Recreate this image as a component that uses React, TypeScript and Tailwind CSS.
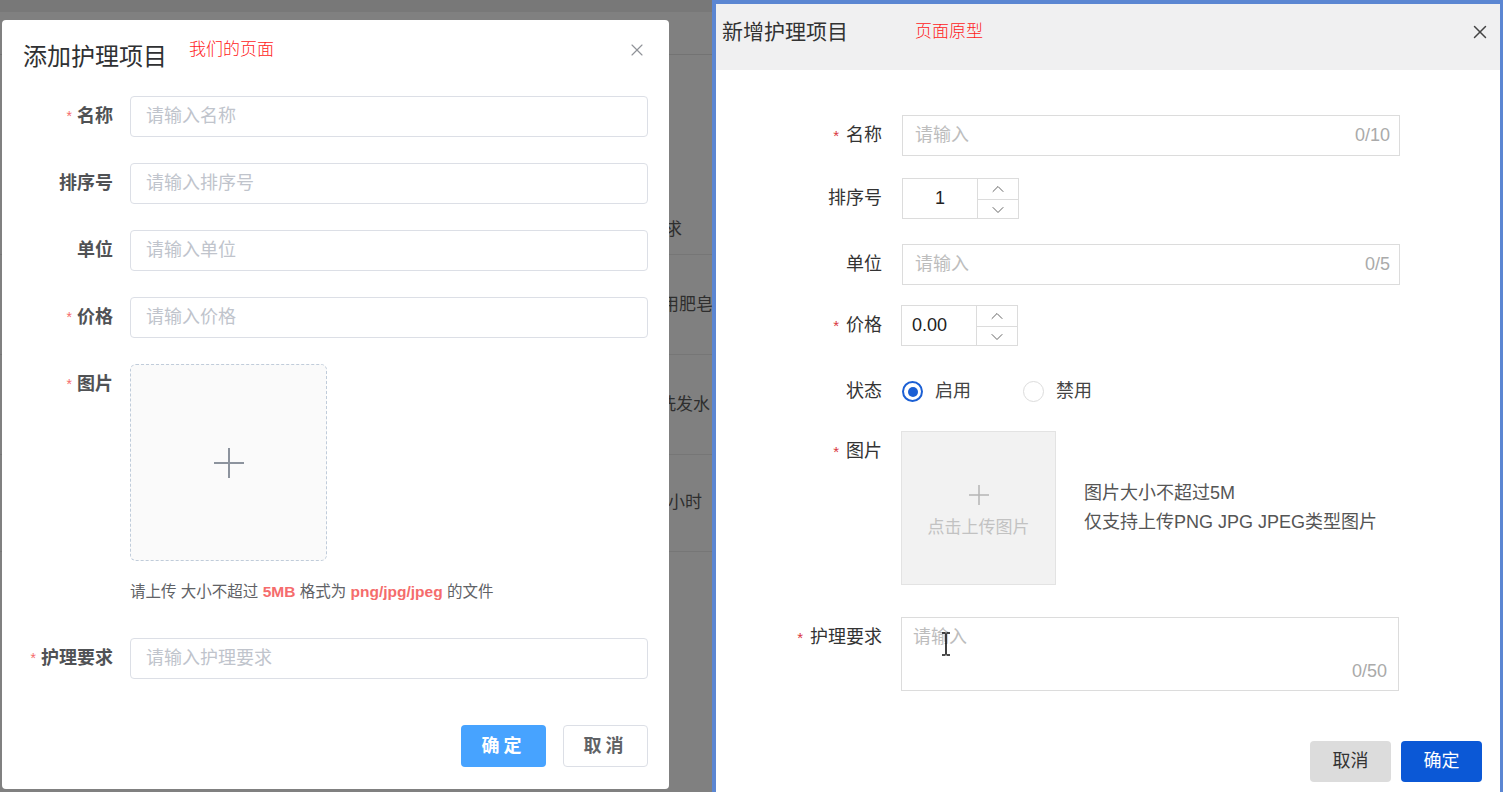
import { ChevronDown, ChevronUp, X } from "lucide-react";

const BG_ROWS = [
	{ text: "护理要求", offset: "ml-[614px]", h: "h-[50px]" },
	{ text: "使用肥皂", offset: "ml-[645px]", h: "h-[100px]" },
	{ text: "洗发水", offset: "ml-[659px]", h: "h-[100px]" },
	{ text: "小时", offset: "ml-[668px]", h: "h-[97px]" },
];

function OurLabel({ text, required }: { text: string; required?: boolean }) {
	return (
		<div className="w-[128px] shrink-0 pr-[17px] text-right text-[18px] leading-[41px] font-semibold text-[#505255]">
			{required && (
				<span className="mr-[5px] align-top text-[14px] font-normal text-[#f56c6c]">*</span>
			)}
			{text}
		</div>
	);
}

function OurInput({ placeholder }: { placeholder: string }) {
	return (
		<input
			type="text"
			placeholder={placeholder}
			className="h-[41px] flex-1 rounded-[4px] border border-[#dcdfe6] px-[15px] text-[18px] text-[#606266] outline-none placeholder:text-[#c0c4cc]"
		/>
	);
}

function ProtoLabel({ text, required }: { text: string; required?: boolean }) {
	return (
		<div className="w-[166px] shrink-0 text-right text-[18px] leading-[41px] text-[#333]">
			{required && <span className="mr-[7px] text-[15px] text-[#d9363e]">*</span>}
			{text}
		</div>
	);
}

function CountInput({ count }: { count: string }) {
	return (
		<div className="flex h-[41px] w-[498px] items-center border border-[#dcdcdc] pl-[12px] pr-[9px]">
			<input
				type="text"
				placeholder="请输入"
				className="min-w-0 flex-1 text-[18px] text-[#333] outline-none placeholder:text-[#bdbdbd]"
			/>
			<span className="text-[18px] text-[#aaa]">{count}</span>
		</div>
	);
}

function NumberBox({ value, align }: { value: string; align: "center" | "left" }) {
	return (
		<div className="flex h-[41px] w-[117px] border border-[#dcdcdc]">
			<div
				className={`flex flex-1 items-center text-[18px] text-[#222] ${
					align === "center" ? "justify-center" : "pl-[10px]"
				}`}
			>
				{value}
			</div>
			<div className="flex w-[41px] flex-col border-l border-[#dcdcdc]">
				<div className="flex flex-1 items-center justify-center border-b border-[#dcdcdc]">
					<ChevronUp size={20} strokeWidth={1.2} className="text-[#666]" />
				</div>
				<div className="flex flex-1 items-center justify-center">
					<ChevronDown size={20} strokeWidth={1.2} className="text-[#666]" />
				</div>
			</div>
		</div>
	);
}

export default function App() {
	return (
		<div className="flex h-[792px] w-[1503px] overflow-hidden bg-[#808080] font-['Liberation_Sans','Noto_Sans_CJK_SC',sans-serif]">
			{/* Left: our page, dimmed list behind a dialog */}
			<div className="relative h-full w-[712px] shrink-0 overflow-hidden bg-[#808080]">
				<div className="h-[12px] bg-[#787878]" />
				<div className="h-[43px] border-b border-[#737373]" />
				<div className="h-[150px]" />
				{BG_ROWS.map((r) => (
					<div
						key={r.text}
						className={`flex ${r.h} items-center border-b border-[#767676] text-[17px] text-[#2e2e2e]`}
					>
						<span className={`${r.offset} whitespace-nowrap`}>{r.text}</span>
					</div>
				))}

				{/* Dialog */}
				<div className="absolute left-[2px] top-[20px] flex h-[769px] w-[667px] flex-col rounded-[4px] bg-white">
					<div className="flex items-center px-[21px] pt-[21px]">
						<h2 className="text-[24px] leading-[32px] text-[#303133]">添加护理项目</h2>
						<span className="ml-[22px] -mt-[14px] text-[17px] font-light text-[#ff1a1a]">
							我们的页面
						</span>
						<X size={20} strokeWidth={1.4} className="ml-auto mr-[1px] -mt-[14px] text-[#909399]" />
					</div>

					<div className="mt-[23px] flex flex-col gap-[26px] pr-[21px]">
						<div className="flex">
							<OurLabel text="名称" required />
							<OurInput placeholder="请输入名称" />
						</div>
						<div className="flex">
							<OurLabel text="排序号" />
							<OurInput placeholder="请输入排序号" />
						</div>
						<div className="flex">
							<OurLabel text="单位" />
							<OurInput placeholder="请输入单位" />
						</div>
						<div className="flex">
							<OurLabel text="价格" required />
							<OurInput placeholder="请输入价格" />
						</div>
						<div className="flex">
							<OurLabel text="图片" required />
							<div className="flex flex-col">
								<div className="flex h-[197px] w-[197px] items-center justify-center rounded-[6px] border border-dashed border-[#c0ccda] bg-[#fafafa]">
									<svg width="32" height="32" viewBox="0 0 32 32" className="text-[#8c939d]">
										<path d="M16 1v30M1 16h30" stroke="currentColor" strokeWidth="2" fill="none" />
									</svg>
								</div>
								<p className="mt-[21px] text-[15.5px] leading-[20px] text-[#606266]">
									请上传 大小不超过 <b className="font-bold text-[#f56c6c]">5MB</b> 格式为{" "}
									<b className="font-bold text-[#f56c6c]">png/jpg/jpeg</b> 的文件
								</p>
							</div>
						</div>
						<div className="mt-[10px] flex">
							<OurLabel text="护理要求" required />
							<OurInput placeholder="请输入护理要求" />
						</div>
					</div>

					<div className="mt-[46px] flex justify-end gap-[17px] pr-[21px]">
						<button
							type="button"
							className="h-[42px] w-[85px] rounded-[4px] bg-[#47a3ff] text-[18px] font-semibold tracking-[4px] text-white"
						>
							确定
						</button>
						<button
							type="button"
							className="h-[42px] w-[85px] rounded-[4px] border border-[#dcdfe6] bg-white text-[18px] font-semibold tracking-[4px] text-[#606266]"
						>
							取消
						</button>
					</div>
				</div>
			</div>

			{/* Right: prototype */}
			<div className="flex h-full flex-1 flex-col border-l-[4px] border-r-[3px] border-t-[4px] border-[#5b86d2] bg-white">
				<div className="flex h-[66px] shrink-0 items-center bg-[#f0f0f1] pb-[10px] pl-[6px] pr-[9px]">
					<h2 className="text-[21px] text-[#333]">新增护理项目</h2>
					<span className="ml-[67px] text-[17px] font-light text-[#ff1a1a]">页面原型</span>
					<X size={22} strokeWidth={1.6} className="ml-auto text-[#444]" />
				</div>

				<div className="flex flex-col pt-[45px]">
					<div className="flex items-center gap-[20px]">
						<ProtoLabel text="名称" required />
						<CountInput count="0/10" />
					</div>
					<div className="mt-[22px] flex items-center gap-[20px]">
						<ProtoLabel text="排序号" />
						<NumberBox value="1" align="center" />
					</div>
					<div className="mt-[25px] flex items-center gap-[20px]">
						<ProtoLabel text="单位" />
						<CountInput count="0/5" />
					</div>
					<div className="mt-[20px] flex items-center gap-[19px]">
						<ProtoLabel text="价格" required />
						<NumberBox value="0.00" align="left" />
					</div>
					<div className="mt-[25px] flex items-center gap-[20px]">
						<ProtoLabel text="状态" />
						<div className="flex items-center text-[18px] text-[#444]">
							<span className="flex h-[21px] w-[21px] items-center justify-center rounded-full border-2 border-[#1b5fd4]">
								<span className="h-[10px] w-[10px] rounded-full bg-[#1b5fd4]" />
							</span>
							<span className="ml-[12px]">启用</span>
							<span className="ml-[52px] h-[21px] w-[21px] rounded-full border border-[#dcdcdc]" />
							<span className="ml-[12px]">禁用</span>
						</div>
					</div>
					<div className="mt-[19px] flex items-start gap-[19px]">
						<ProtoLabel text="图片" required />
						<div className="flex h-[154px] w-[155px] flex-col items-center border border-[#e3e3e3] bg-[#f2f2f2] pt-[52px]">
							<svg width="22" height="22" viewBox="0 0 22 22" className="text-[#b5b5b5]">
								<path d="M11 1v20M1 11h20" stroke="currentColor" strokeWidth="1.5" fill="none" />
							</svg>
							<span className="mt-[10px] text-[17px] leading-[24px] text-[#c2c2c2]">点击上传图片</span>
						</div>
						<div className="ml-[9px] mt-[52px] flex flex-col gap-[8px] text-[18px] leading-[21px] text-[#555]">
							<span>图片大小不超过5M</span>
							<span>仅支持上传PNG JPG JPEG类型图片</span>
						</div>
					</div>
					<div className="mt-[32px] flex items-start gap-[19px]">
						<ProtoLabel text="护理要求" required />
						<div className="relative flex h-[74px] w-[498px] flex-col border border-[#dcdcdc] px-[11px] pt-[5px]">
							<span className="text-[18px] leading-[28px] text-[#bdbdbd]">请输入</span>
							<span className="mt-auto mb-[9px] self-end text-[18px] leading-[20px] text-[#aaa]">0/50</span>
							<svg
								width="10"
								height="24"
								viewBox="0 0 10 24"
								className="absolute left-[39px] top-[14px]"
							>
								<path
									d="M1 1h3.5M5.5 1H9M5 1.5v21M1 23h3.5M5.5 23H9"
									stroke="#111"
									strokeWidth="1.6"
									fill="none"
								/>
							</svg>
						</div>
					</div>
					<div className="mt-[50px] flex justify-end gap-[10px] pr-[18px]">
						<button
							type="button"
							className="h-[41px] w-[81px] rounded-[4px] bg-[#dcdcdc] text-[18px] text-[#333]"
						>
							取消
						</button>
						<button
							type="button"
							className="h-[41px] w-[81px] rounded-[4px] bg-[#0b58d6] text-[18px] text-white"
						>
							确定
						</button>
					</div>
				</div>
			</div>
		</div>
	);
}
